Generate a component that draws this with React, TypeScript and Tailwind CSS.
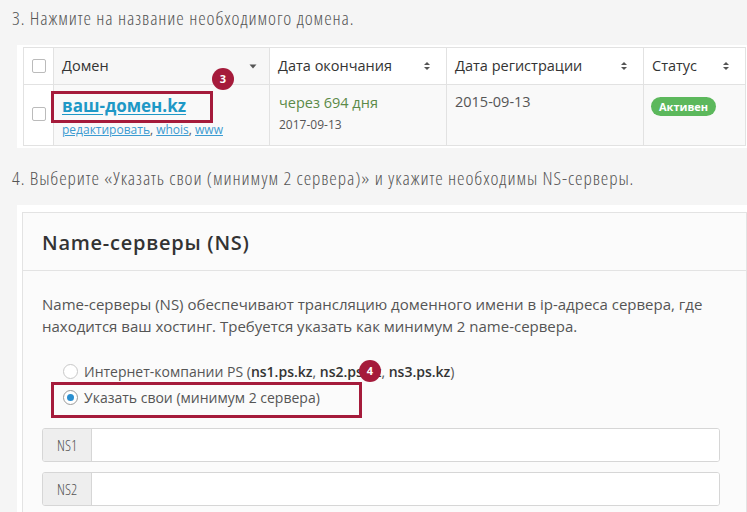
import React from 'react'

const SortBoth = () => (
	<svg width="8" height="10" viewBox="0 0 8 10" className="shrink-0">
		<path d="M4 1 L7 4 H1 Z" fill="#555" />
		<path d="M4 9 L7 6 H1 Z" fill="#555" />
	</svg>
)

const Caret = () => (
	<svg width="8" height="5" viewBox="0 0 8 5" className="shrink-0">
		<path d="M0.5 0.5 H7.5 L4 4.5 Z" fill="#555" />
	</svg>
)

const Badge = ({ n, className }: { n: string; className: string }) => (
	<span
		className={`absolute flex h-[22px] w-[22px] items-center justify-center rounded-full bg-[#a51b3b] text-[11px] font-bold text-white ${className}`}
	>
		{n}
	</span>
)

const Checkbox = () => (
	<span className="block h-[14px] w-[14px] rounded-[2px] border border-[#bbb] bg-white" />
)

const App = () => {
	return (
		<div className="relative h-[512px] w-[747px] overflow-hidden bg-[#f5f5f5] font-['Open_Sans',sans-serif] text-[#333]">
			<p className="whitespace-nowrap pl-[12px] pt-[9px] text-[19px] font-light leading-[18px] tracking-[0.9px] text-[#555] [font-stretch:87.5%]">
				3. Нажмите на название необходимого домена.
			</p>

			{/* таблица доменов */}
			<div className="ml-[17px] mt-[18px] bg-white pb-[2px] pl-[6px] pt-[2px]">
				<table className="w-[722px] table-fixed border-collapse text-[14.5px]">
					<colgroup>
						<col className="w-[30px]" />
						<col className="w-[216px]" />
						<col className="w-[177px]" />
						<col className="w-[197px]" />
						<col className="w-[102px]" />
					</colgroup>
					<thead>
						<tr className="h-[37px]">
							<th className="border border-[#e2e2e2] bg-white">
								<div className="flex justify-center">
									<Checkbox />
								</div>
							</th>
							<th className="relative border border-[#e2e2e2] bg-[#f7f7f7] pl-[8px] pr-[12px] text-left font-normal">
								<div className="flex items-center justify-between">
									<span>Домен</span>
									<Caret />
								</div>
								<Badge n="3" className="left-[158px] top-[20px] z-10" />
							</th>
							<th className="border border-[#e2e2e2] bg-white pl-[8px] pr-[15px] text-left font-normal">
								<div className="flex items-center justify-between">
									<span>Дата окончания</span>
									<SortBoth />
								</div>
							</th>
							<th className="border border-[#e2e2e2] bg-white pl-[8px] pr-[15px] text-left font-normal">
								<div className="flex items-center justify-between">
									<span>Дата регистрации</span>
									<SortBoth />
								</div>
							</th>
							<th className="border border-[#e2e2e2] bg-white pl-[8px] pr-[15px] text-left font-normal">
								<div className="flex items-center justify-between">
									<span>Статус</span>
									<SortBoth />
								</div>
							</th>
						</tr>
					</thead>
					<tbody>
						<tr className="h-[61px] bg-[#f9f9f9]">
							<td className="border border-[#e2e2e2] bg-white align-top">
								<div className="flex justify-center pt-[22px]">
									<Checkbox />
								</div>
							</td>
							<td className="relative border border-[#e2e2e2] pl-[8px] align-top">
								<div className="pt-[9px] text-[17px] font-bold leading-[24px]">
									<a className="text-[#1e98c6] underline underline-offset-2" href="#">
										ваш-домен.kz
									</a>
								</div>
								<div className="mt-[4px] text-[12px] leading-[16px] text-[#555]">
									<a className="text-[#3b9bd1] underline" href="#">редактировать</a>,{' '}
									<a className="text-[#3b9bd1] underline" href="#">whois</a>,{' '}
									<a className="text-[#3b9bd1] underline" href="#">www</a>
								</div>
								<span className="absolute left-[-3px] top-[6px] h-[32px] w-[162px] border-[3px] border-[#a51b3b]" />
							</td>
							<td className="border border-[#e2e2e2] pl-[9px] align-top">
								<div className="pt-[8px] leading-[20px] text-[#5b8a48]">через 694 дня</div>
								<div className="pt-[4px] text-[12px] leading-[16px] text-[#555]">2017-09-13</div>
							</td>
							<td className="border border-[#e2e2e2] pl-[8px] align-top">
								<div className="pt-[7px] leading-[20px] text-[#555]">2015-09-13</div>
							</td>
							<td className="border border-[#e2e2e2] pl-[7px] align-top">
								<span className="mt-[12px] inline-block rounded-full bg-[#5cb85c] px-[8px] text-[11px] font-bold leading-[19px] text-white">
									Активен
								</span>
							</td>
						</tr>
					</tbody>
				</table>
			</div>

			<p className="whitespace-nowrap pl-[12px] pt-[21px] text-[19px] font-light leading-[18px] tracking-[0.9px] text-[#555] [font-stretch:87.5%]">
				4. Выберите «Указать свои (минимум 2 сервера)» и укажите необходимы NS-серверы.
			</p>

			{/* панель NS */}
			<div className="ml-[17px] mt-[18px] bg-white pl-[5px] pt-[7px]">
				<div className="border border-[#e3e3e3] bg-[#fbfbfb]">
					<div className="flex h-[58px] items-center border-b border-[#e3e3e3] pl-[19px] pt-[3px]">
						<h3 className="text-[20px] font-semibold tracking-[0.75px] text-[#333]">Name-серверы (NS)</h3>
					</div>
					<div className="pl-[19px] pr-[18px] pt-[22px]">
						<p className="text-[15px] leading-[22px] text-[#555]">
							Name-серверы (NS) обеспечивают трансляцию доменного имени в ip-адреса сервера, где находится ваш хостинг. Требуется указать как минимум 2 name-сервера.
						</p>
						<div className="relative mt-[21px] pl-[21px] text-[14px] text-[#555]">
							<label className="flex h-[26px] items-center gap-[6px]">
								<span className="block h-[15px] w-[15px] rounded-full border border-[#c8c8c8] bg-white" />
								<span>
									Интернет-компании PS (<b className="font-semibold text-[#333]">ns1.ps.kz</b>,{' '}
									<b className="font-semibold text-[#333]">ns2.ps.kz</b>,{' '}
									<b className="font-semibold text-[#333]">ns3.ps.kz</b>)
								</span>
							</label>
							<label className="flex h-[26px] items-center gap-[6px]">
								<span className="flex h-[15px] w-[15px] items-center justify-center rounded-full border border-[#9a9a9a] bg-white">
									<span className="block h-[7px] w-[7px] rounded-full bg-[#2b8fd0]" />
								</span>
								<span>Указать свои (минимум 2 сервера)</span>
							</label>
							<span className="absolute left-[9px] top-[24px] h-[36px] w-[311px] border-[3px] border-[#a51b3b]" />
							<Badge n="4" className="left-[317px] top-[2px]" />
						</div>
						<div className="mt-[18px] flex flex-col gap-[10px] pb-[20px]">
							{['NS1', 'NS2'].map((ns) => (
								<div key={ns} className="flex h-[34px] w-[678px] overflow-hidden rounded-[3px] border border-[#d6d6d6] bg-white">
									<span className="flex w-[49px] items-center justify-center border-r border-[#d6d6d6] bg-[#eee] text-[15px] font-light text-[#555] [font-stretch:87.5%]">
										{ns}
									</span>
									<input className="flex-1 bg-white outline-none" />
								</div>
							))}
						</div>
					</div>
				</div>
			</div>
		</div>
	)
}

export default App
